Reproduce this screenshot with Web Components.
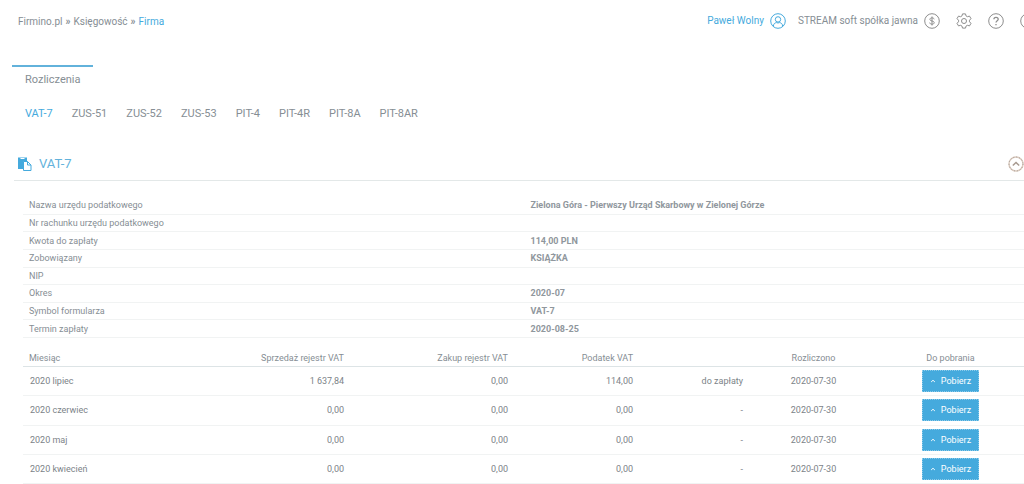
<!DOCTYPE html>
<html lang="pl">
<head>
<meta charset="utf-8">
<meta name="viewport" content="width=device-width, initial-scale=1">
<title>Firmino.pl – VAT-7</title>
<style>
  body {
    margin: 0;
    background: #fff;
    color: #868e94;
    font: 9px/12px Roboto, "Liberation Sans", sans-serif;
    --accent: #45aadd;
    --rule: #f1f3f3;
  }
</style>
</head>
<body>
<firm-app></firm-app>
<script>
const ICONS = {
  user: '<circle cx="8" cy="8" r="7.3"/><circle cx="8" cy="6.4" r="2.7"/><path d="M3.4 13.2c.1-2.400 1.300-3.300 3-3.600.8.5 2.400.5 3.200 0 1.700.3 2.900 1.200 3 3.600"/>',
  dollar: '<circle cx="8" cy="8" r="7.3"/><path d="M10.200 6.300C10 5.300 9.200 4.900 8 4.900S5.900 5.400 5.900 6.400c0 2.200 4.300 1 4.300 3.200 0 1-.9 1.600-2.200 1.600s-2.200-.6-2.300-1.600M8 3.500v9"/>',
  gear: '<path d="M6.500.9h3l.5 2 1.500.8 2-.6 1.500 2.600-1.500 1.500v1.600l1.500 1.500-1.500 2.600-2-.6-1.500.8-.5 2h-3l-.5-2-1.500-.8-2 .6L1 10.300l1.500-1.500V7.200L1 5.700l1.500-2.600 2 .6L6 2.900z"/><circle cx="8" cy="8" r="2.500"/>',
  help: '<circle cx="8" cy="8" r="7.3"/><path stroke-width="1.300" d="M5.900 6.300c0-1.300.9-2 2.100-2s2.200.7 2.200 1.900c0 1.600-2.200 1.500-2.200 3.400M8 11v1.300"/>',
  power: '<circle cx="8" cy="8" r="7.3"/><path d="M8 4v4M6 5.500a3.500 3.500 0 1 0 4 0"/>',
  collapse: '<circle cx="8" cy="8" r="7" stroke="#dccbbf" stroke-width="1.500"/><circle cx="8" cy="8" r="7" stroke="#a39b96" stroke-dasharray="1 2"/><path stroke-width="1.500" stroke="#a89a90" d="M4.800 9.500 8 6.500l3.200 3"/>',
  paste: '<path fill="currentColor" stroke="none" d="M1 1.500h9V6H7v7H1z"/><path fill="#fff" stroke="none" d="M3.500 2h4v1h-4z"/><path fill="#fff" d="M6.500 5.500h4l3.500 3.500v5.500H6.500z"/><path d="M10.500 5.500V9H14"/>',
  caret: '<path stroke-width="2.500" d="M3 10.500 8 6l5 4.500"/>'
};

class FirmIcon extends HTMLElement {
  constructor() {
    super();
    this.attachShadow({ mode: 'open' }).innerHTML = `
      <style>
        :host { display: block; flex: none; width: 16px; height: 16px; }
        svg { display: block; width: 100%; height: 100%; fill: none; stroke: currentColor; }
      </style>
      <svg viewBox="0 0 16 16" aria-hidden="true">${ICONS[this.getAttribute('name')]}</svg>`;
  }
}

class FirmTopbar extends HTMLElement {
  constructor() {
    super();
    this.attachShadow({ mode: 'open' }).innerHTML = `
      <style>
        :host { display: block; overflow: hidden; font-size: 10px; line-height: 16px; }
        header { display: flex; align-items: center; justify-content: space-between;
          padding: 12px 0 11px 18px; margin-right: -12px; white-space: nowrap; }
        nav, .tools, .pair { display: flex; align-items: center; }
        nav { gap: 3px; padding-top: 2px; }
        nav b { font-size: 10px; font-weight: 700; }
        .tools { gap: 16px; }
        .pair { gap: 6px; }
        .account { gap: 12px; display: flex; }
        a { color: inherit; text-decoration: none; }
        .on { color: var(--accent); }
        button { all: unset; cursor: pointer; color: #8d8d8d; }
      </style>
      <header>
        <nav aria-label="Ścieżka"><a href="#">Firmino.pl</a><b>»</b><a href="#">Księgowość</a><b>»</b><a href="#" class="on">Firma</a></nav>
        <div class="tools">
          <div class="account">
            <a href="#" class="pair on"><span>Paweł Wolny</span><firm-icon name="user"></firm-icon></a>
            <div class="pair"><span>STREAM soft spółka jawna</span><button aria-label="Płatności"><firm-icon name="dollar"></firm-icon></button></div>
          </div>
          <button aria-label="Ustawienia"><firm-icon name="gear"></firm-icon></button>
          <button aria-label="Pomoc"><firm-icon name="help"></firm-icon></button>
          <button aria-label="Wyloguj"><firm-icon name="power"></firm-icon></button>
        </div>
      </header>`;
  }
}

class FirmTabs extends HTMLElement {
  constructor() {
    super();
    const items = ['VAT-7', 'ZUS-51', 'ZUS-52', 'ZUS-53', 'PIT-4', 'PIT-4R', 'PIT-8A', 'PIT-8AR'];
    this.attachShadow({ mode: 'open' }).innerHTML = `
      <style>
        :host { display: block; padding: 24px 12px 0; font-size: 11px; line-height: 16px; }
        a { color: inherit; text-decoration: none; }
        .main a { display: inline-block; border-top: 2px solid #62b2db; padding: 5px 13px; }
        .sub { display: flex; flex-wrap: wrap; gap: 19px; padding: 13px 13px 0; }
        .sub a:first-child { color: var(--accent); }
      </style>
      <nav class="main" aria-label="Moduł"><a href="#">Rozliczenia</a></nav>
      <nav class="sub" aria-label="Formularze">${items.map(t => `<a href="#">${t}</a>`).join('')}</nav>`;
  }
}

class FirmPanel extends HTMLElement {
  constructor() {
    super();
    this.attachShadow({ mode: 'open' }).innerHTML = `
      <style>
        :host { display: block; padding-top: 33px; }
        header { display: flex; align-items: center; gap: 6px; margin-left: 14px;
          padding: 0 0 7px 3px; border-bottom: 1px solid #e3e8e8; color: var(--accent); }
        h1 { flex: 1; margin: 0; font-size: 13px; line-height: 18px; font-weight: 400; color: #62b2db; }
        button { all: unset; cursor: pointer; }
        .body { padding: 16px 0 0 23px; }
      </style>
      <section>
        <header>
          <firm-icon name="paste"></firm-icon>
          <h1>${this.getAttribute('heading')}</h1>
          <button aria-label="Zwiń"><firm-icon name="collapse"></firm-icon></button>
        </header>
        <div class="body"><slot></slot></div>
      </section>`;
  }
}

class FirmDetails extends HTMLElement {
  constructor() {
    super();
    const rows = [
      ['Nazwa urzędu podatkowego', 'Zielona Góra - Pierwszy Urząd Skarbowy w Zielonej Górze'],
      ['Nr rachunku urzędu podatkowego', ''],
      ['Kwota do zapłaty', '114,00 PLN'],
      ['Zobowiązany', 'KSIĄŻKA'],
      ['NIP', ''],
      ['Okres', '2020-07'],
      ['Symbol formularza', 'VAT-7'],
      ['Termin zapłaty', '2020-08-25']
    ];
    this.attachShadow({ mode: 'open' }).innerHTML = `
      <style>
        :host { display: block; }
        dl { display: grid; grid-auto-rows: 1fr; min-height: 141px; margin: 0; }
        div { display: grid; grid-template-columns: 1fr 1fr; align-items: center; border-bottom: 1px solid var(--rule); }
        dt { padding: 0 6px; }
        dd { margin: 0; padding: 0 7px; font-weight: 700; color: #90979d; }
      </style>
      <dl>${rows.map(([k, v]) => `<div><dt>${k}</dt><dd>${v}</dd></div>`).join('')}</dl>`;
  }
}

class FirmDownload extends HTMLElement {
  constructor() {
    super();
    this.attachShadow({ mode: 'open' }).innerHTML = `
      <style>
        :host { display: inline-block; vertical-align: middle; }
        button { display: flex; align-items: center; gap: 5px; height: 22px; margin: 0; padding: 0 7px;
          border: 1px dotted #8ccbea; border-radius: 0; background: var(--accent); color: #fff; font: inherit; cursor: pointer; }
        firm-icon { width: 6px; height: 6px; }
      </style>
      <button type="button"><firm-icon name="caret"></firm-icon><span><slot></slot></span></button>`;
  }
}

class FirmRegister extends HTMLElement {
  constructor() {
    super();
    const head = ['Miesiąc', 'Sprzedaż rejestr VAT', 'Zakup rejestr VAT', 'Podatek VAT', '', 'Rozliczono', 'Do pobrania'];
    const widths = [138, 190, 164, 125, 110, 127, 147];
    const rows = [
      ['2020 lipiec', '1 637,84', '0,00', '114,00', 'do zapłaty', '2020-07-30'],
      ['2020 czerwiec', '0,00', '0,00', '0,00', '-', '2020-07-30'],
      ['2020 maj', '0,00', '0,00', '0,00', '-', '2020-07-30'],
      ['2020 kwiecień', '0,00', '0,00', '0,00', '-', '2020-07-30']
    ];
    this.attachShadow({ mode: 'open' }).innerHTML = `
      <style>
        :host { display: block; padding-top: 11px; }
        table { width: 100%; height: 135px; table-layout: fixed; border-collapse: separate; border-spacing: 0; }
        th, td { box-sizing: border-box; padding: 0 7px; text-align: right; font-weight: 400; }
        th { height: 18px; border-bottom: 1px solid #dde4e6; }
        td { height: 29px; border-bottom: 1px solid var(--rule); color: #7c8388; }
        th:first-child { text-align: left; padding-left: 6px; }
        td:first-child { text-align: left; }
        :is(th, td):nth-child(n+6) { text-align: center; }
      </style>
      <table>
        <colgroup>${widths.map(w => `<col style="width:${w}px">`).join('')}</colgroup>
        <thead><tr>${head.map(h => h ? `<th scope="col">${h}</th>` : '<th></th>').join('')}</tr></thead>
        <tbody>${rows.map(r => `<tr>${r.map(c => `<td>${c}</td>`).join('')}<td><firm-download>Pobierz</firm-download></td></tr>`).join('')}</tbody>
      </table>`;
  }
}

class FirmApp extends HTMLElement {
  constructor() {
    super();
    this.attachShadow({ mode: 'open' }).innerHTML = `
      <style>:host { display: block; }</style>
      <firm-topbar></firm-topbar>
      <main>
        <firm-tabs></firm-tabs>
        <firm-panel heading="VAT-7">
          <firm-details></firm-details>
          <firm-register></firm-register>
        </firm-panel>
      </main>`;
  }
}

customElements.define('firm-icon', FirmIcon);
customElements.define('firm-topbar', FirmTopbar);
customElements.define('firm-tabs', FirmTabs);
customElements.define('firm-panel', FirmPanel);
customElements.define('firm-details', FirmDetails);
customElements.define('firm-download', FirmDownload);
customElements.define('firm-register', FirmRegister);
customElements.define('firm-app', FirmApp);
</script>
</body>
</html>
